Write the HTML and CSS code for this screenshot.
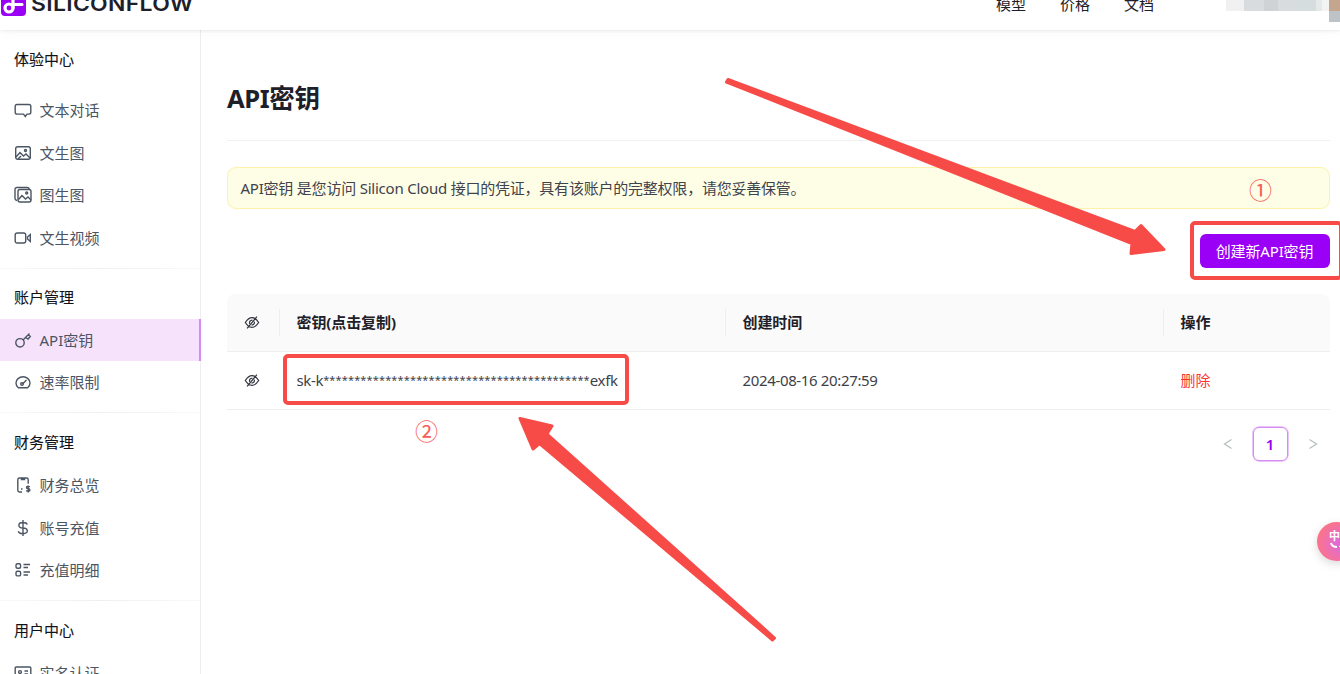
FILE: index.html
```html
<!DOCTYPE html>
<html lang="zh-CN">
<head>
<meta charset="utf-8">
<title>API密钥</title>
<link rel="stylesheet" href="styles.css">
</head>
<body>
<div class="app">
  <header class="topbar">
    <div class="brand">
      <svg class="brand-mark" width="25" height="26" viewBox="0 0 25 26"><rect width="25" height="26" rx="4" fill="#9a00f5"/><circle cx="8" cy="18" r="4" fill="none" stroke="#fff" stroke-width="3.200"/><path d="M12 18V9q0-3 3-3M12 14.500h9" fill="none" stroke="#fff" stroke-width="3.200" stroke-linecap="round"/></svg>
      <span class="brand-name">SILICONFLOW</span>
    </div>
    <nav class="topnav"><a>模型</a><a>价格</a><a>文档</a></nav>
    <div class="account"><i class="px a"></i><i class="px b"></i><i class="px c"></i><i class="px b"></i><i class="px d"></i><i class="px e"></i></div>
  </header>
  <div class="body">
    <aside class="sidebar">
      <section class="group first">
        <h2>体验中心</h2>
        <a class="item"><svg viewBox="0 0 18 18"><path d="M3 3.500h12q1.800 0 1.800 1.800v6q0 1.800-1.800 1.800h-2l-1.700 2.400-1.800-2.400H3q-1.800 0-1.800-1.800v-6Q1.200 3.500 3 3.500z"/></svg>文本对话</a>
        <a class="item"><svg viewBox="0 0 18 18"><rect x="1.700" y="2.700" width="14.600" height="12.600" rx="2"/><path d="M2 13l4-4.500 3.500 3.500 2.500-2 4 4M4 15l3-3"/><circle cx="11.500" cy="6.500" r="1"/></svg>文生图</a>
        <a class="item"><svg viewBox="0 0 18 18"><path d="M3 14.500q-2-.300-2-2V3.500q0-2 2-2h10q2 0 2.300 1.500"/><rect x="4" y="3.500" width="13" height="12.500" rx="2"/><path d="M4.500 13.500l3.500-4 3.500 3.500 2.500-2 3 3"/><circle cx="12.700" cy="7" r="1"/></svg>图生图</a>
        <a class="item"><svg viewBox="0 0 18 18"><rect x="1.200" y="4" width="10.500" height="10" rx="2"/><path d="M13.500 8l2.800-2.500v7L13.500 10z"/></svg>文生视频</a>
      </section>
      <section class="group">
        <h2>账户管理</h2>
        <a class="item active"><svg viewBox="0 0 18 18"><circle cx="6" cy="11.800" r="4.200"/><path d="M9 9l6.500-6.500M11.500 6.500l2.500 1.500 2.300-2.500-2-2"/></svg>API密钥</a>
        <a class="item"><svg viewBox="0 0 18 18"><path d="M4.300 14.700Q2 13 2 10a7 6.200 0 0 1 14 0Q16 13 13.700 14.700zM8.500 11l4-4"/><circle cx="8" cy="11" r="1.300"/></svg>速率限制</a>
      </section>
      <section class="group">
        <h2>财务管理</h2>
        <a class="item"><svg viewBox="0 0 18 18"><path d="M8 16H5.500q-1.700 0-1.700-1.700V3.700Q3.800 2 5.500 2h7q1.700 0 1.700 1.700v4M7.500 2v1.500h3V2M7 13h1.500M16 10.700q-3.500-1-3.500.700 0 1.300 1.700 1.300t1.700 1.300q0 1.700-3.700.700M14.200 9.500v7"/></svg>财务总览</a>
        <a class="item"><svg viewBox="0 0 18 18"><path d="M13.300 5.500Q12.600 3.500 9 3.500c-5.500 0-5.500 5.500 0 5.500s6 5.700 0 5.700q-4 0-4.700-2.400M9 1v16"/></svg>账号充值</a>
        <a class="item"><svg viewBox="0 0 18 18"><rect x="2" y="2.700" width="4.600" height="4.600" rx="1.500"/><rect x="2" y="10.300" width="4.600" height="4.600" rx="1.500"/><path d="M9.500 3.500H16M9.500 6.500H14M9.500 11H16M9.500 14H14"/></svg>充值明细</a>
      </section>
      <section class="group">
        <h2>用户中心</h2>
        <a class="item"><svg viewBox="0 0 18 18"><rect x="1.200" y="3" width="15.600" height="12.500" rx="1"/><circle cx="6" cy="8" r="1.400"/><path d="M10.500 7H14M10.500 10H14M4 13q0-2.500 2-2.500T8 13"/></svg>实名认证</a>
      </section>
    </aside>
    <main class="main">
      <h1>API密钥</h1>
      <div class="alert">API密钥 是您访问 Silicon Cloud 接口的凭证，具有该账户的完整权限，请您妥善保管。</div>
      <div class="actions"><button class="create">创建新API密钥</button></div>
      <div class="table">
        <div class="row head">
          <div class="cell"><svg class="eye" viewBox="0 0 18 16"><path d="M1.500 8Q5 2.500 9 2.500T16.500 8Q13 13.500 9 13.500T1.500 8zM14.500 1.500L3.500 14.500"/><path d="M6.300 9.500Q5.500 5.500 9.500 5.200M11.700 7Q12 10.500 8.500 11"/></svg></div>
          <div class="cell">密钥(点击复制)</div>
          <div class="cell">创建时间</div>
          <div class="cell">操作</div>
        </div>
        <div class="row">
          <div class="cell"><svg class="eye" viewBox="0 0 18 16"><path d="M1.500 8Q5 2.500 9 2.500T16.500 8Q13 13.500 9 13.500T1.500 8zM14.500 1.500L3.500 14.500"/><path d="M6.300 9.500Q5.500 5.500 9.500 5.200M11.700 7Q12 10.500 8.500 11"/></svg></div>
          <div class="cell key"><span>sk-k</span><span class="stars">*******************************************</span><span>exfk</span></div>
          <div class="cell date">2024-08-16 20:27:59</div>
          <div class="cell danger">删除</div>
        </div>
      </div>
      <div class="pager">
        <svg viewBox="0 0 10 12"><path d="M8.500 1.500L1.500 6l7 4.500"/></svg>
        <span class="page">1</span>
        <svg viewBox="0 0 10 12"><path d="M1.500 1.500L8.500 6l-7 4.500"/></svg>
      </div>
    </main>
  </div>
  <div class="frame frame-button"></div>
  <div class="frame frame-key"></div>
  <span class="mark mark-one">①</span>
  <span class="mark mark-two">②</span>
  <svg class="arrows" width="1340" height="674" viewBox="0 0 1340 674">
    <path d="M728 79.500L1135 231.500 1141 225.500 1164 249.500 1131 253.500 1132 243.500 726.500 82z"/>
    <path d="M520 418.500L552 426 547 434 774.500 638 772.500 640 539.500 443.500 533 449z"/>
  </svg>
  <div class="bubble"><span>中</span><svg width="14" height="7" viewBox="0 0 14 7"><path d="M2 1q1 4 6 4M11 4v1"/></svg></div>
</div>
</body>
</html>
```
FILE: styles.css
```css
* { box-sizing: border-box; }
body {
  margin: 0;
  background: #fff;
  color: #1e2029;
  font: 15px/20px "Noto Sans", "Noto Sans CJK SC", sans-serif;
}
.app { position: relative; width: 1340px; height: 674px; overflow: hidden; }
.topbar {
  position: relative;
  display: flex;
  height: 30px;
  box-shadow: 0 1px 3px rgba(0,0,0,.07), 0 3px 12px rgba(0,0,0,.025);
}
.brand { display: flex; flex: none; width: 996px; margin-top: -10px; }
.brand-mark { flex: none; margin-left: 1px; }
.brand-name {
  margin-left: 5px;
  font: 600 20px/28px Inter, sans-serif;
  letter-spacing: .3px;
  transform-origin: 0 50%;
  transform: scaleX(1.145);
}
.topnav { display: flex; flex: none; gap: 34px; width: 230px; margin-top: -6px; font-size: 15px; }
.account { display: flex; flex: none; height: 11px; }
.px { flex: none; width: 18px; height: 11px; }
.px.a { background: #f1f1f2; }
.px.b { width: 20px; background: #d8dcde; }
.px.c { width: 14px; background: #d0d3d5; }
.px.d { width: 31px; background: linear-gradient(90deg, #d5dddd 18px, #e6e9e9 18px 24px, #f2f3f3 24px); }
.px.e { height: 22px; background: linear-gradient(#c4a58d 50%, #bec3c7 50%); }
.body { display: flex; height: 644px; }
.sidebar { flex: none; width: 201px; border-right: 1px solid #ededef; }
.group { padding-top: 8.500px; }
.group + .group::before {
  content: "";
  display: block;
  height: 1px;
  margin-bottom: 8px;
  background: linear-gradient(90deg, #f9f9fa, #efeff1 50%, #f9f9fa);
}
.group h2 {
  margin: 0;
  padding-left: 14px;
  color: #101219;
  font-size: 15px;
  font-weight: 400;
  line-height: 42.500px;
  -webkit-text-stroke: .1px #101219;
}
.group.first { padding-top: 7.500px; }
.group.first h2 { margin-bottom: 9px; }
.group.first + .group { padding-top: 8.500px; }
.group.first + .group h2 { margin-top: -.5px; }
.item { display: flex; align-items: center; gap: 7.500px; height: 42.500px; padding-left: 14px; color: #4b5563; }
.item svg { width: 18px; height: 18px; fill: none; stroke: #4b5563; stroke-width: 1.400; }
.item.active { background: #f6e2fb; border-right: 2px solid #d58bf1; margin-right: -1px; }
.group.first + .group + .group { padding-top: 8.800px; }
.main { flex: none; width: 1102.500px; margin-left: 26px; }
h1 {
  height: 84px;
  margin: 27px 0 26px;
  border-bottom: 1px solid #f1f1f2;
  font-size: 25.600px;
  line-height: 84px;
  letter-spacing: -.4px;
}
.alert {
  height: 41.500px;
  padding-left: 12.500px;
  border: 1px solid #fcf2a8;
  border-radius: 9px;
  background: #fefee6;
  color: #40424c;
  line-height: 41px;
  letter-spacing: -.22px;
}
.actions { display: flex; justify-content: flex-end; margin: 25.500px 0; }
.create {
  width: 130px;
  height: 34px;
  padding: 0;
  border: 0;
  border-radius: 6px;
  background: #9a00f5;
  color: #fff;
  font: inherit;
  letter-spacing: -.15px;
}
.row {
  display: grid;
  grid-template-columns: 53px 446px 438px 1fr;
  align-items: center;
  height: 58px;
  border-bottom: 1px solid #efeff0;
}
.row.head { border-radius: 8px 8px 0 0; background: #fafafa; font-weight: 700; letter-spacing: -.1px; }
.cell { display: flex; align-items: center; height: 27px; padding-left: 16.500px; white-space: nowrap; }
.head .cell:not(:last-child) { border-right: 1px solid #eeeeef; }
.eye { width: 16px; height: 15px; fill: none; stroke: #333641; stroke-width: 1.400; }
.key, .date { color: #3d3f48; letter-spacing: -.35px; }
.stars { font-size: 11px; letter-spacing: .14px; }
.danger { color: #fb3535; }
.pager { display: flex; justify-content: flex-end; align-items: center; gap: 20px; margin: 17px 12px 0 0; }
.pager svg { width: 10px; height: 12px; fill: none; stroke: #b9bec0; stroke-width: 1.300; }
.page {
  width: 35px;
  height: 34px;
  border: 1px solid #d58bf1;
  box-shadow: 0 0 0 .5px #d58bf1;
  border-radius: 6px;
  color: #9a00f5;
  font-weight: 600;
  line-height: 32px;
  text-align: center;
}
.frame { position: absolute; border: 4px solid #f74b48; border-radius: 5px; }
.frame-button { left: 1190px; top: 221px; width: 153px; height: 59px; }
.frame-key { left: 283px; top: 353.500px; width: 346px; height: 51px; }
.mark { position: absolute; color: #f85a58; font: 23px/24px "Noto Sans CJK SC", sans-serif; }
.mark-one { left: 1249px; top: 177px; }
.mark-two { left: 415px; top: 418px; }
.arrows { position: absolute; left: 0; top: 0; fill: #f74b48; stroke: #f74b48; stroke-width: 3; stroke-linejoin: round; }
.bubble {
  position: absolute;
  left: 1317px;
  top: 522px;
  width: 39px;
  height: 39px;
  padding: 8px 0 0 12px;
  border-radius: 50%;
  background: radial-gradient(circle at 60% 55%, #da6be2, #fa738b 70%);
  box-shadow: 0 3px 10px rgba(0,0,0,.15);
  color: #fff;
  font-size: 11px;
  font-weight: 700;
  line-height: 12px;
}
.bubble svg { display: block; fill: none; stroke: #fff; stroke-width: 2; }
```
